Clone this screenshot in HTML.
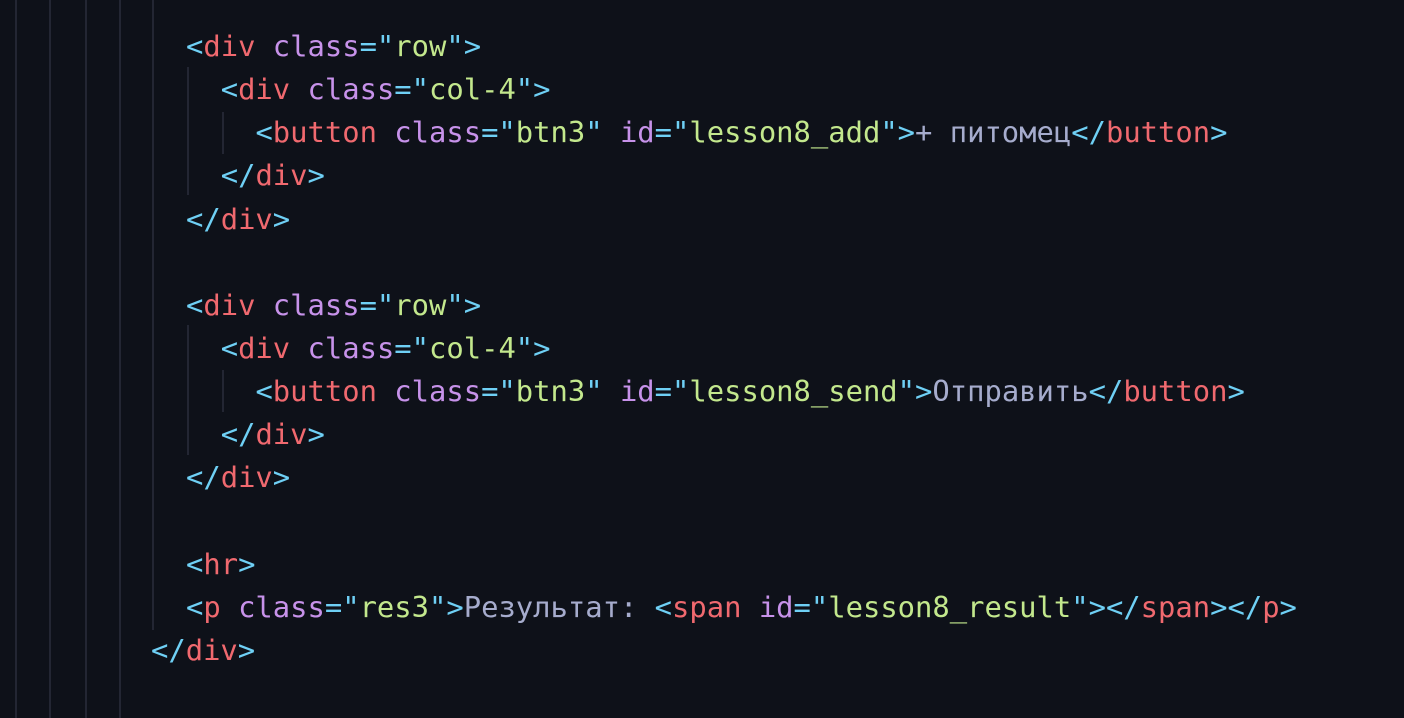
<!DOCTYPE html>
<html><head><meta charset="utf-8"><style>
body{margin:0;width:1404px;height:718px;background:#0e1119;overflow:hidden;position:relative}
.g{position:absolute;width:2px;background:#232633}
.c{position:absolute;left:0;top:25px;font-family:"DejaVu Sans Mono","Liberation Mono",monospace;font-size:28.83px;line-height:43.14px;white-space:pre;color:#a6accd}
.p{color:#6fd0f5}.t{color:#f0696f}.a{color:#c792ea}.s{color:#c3e88d}
</style></head><body>
<div class="g" style="left:15px;top:0;height:718px"></div>
<div class="g" style="left:49px;top:0;height:718px"></div>
<div class="g" style="left:85px;top:0;height:718px"></div>
<div class="g" style="left:119px;top:0;height:718px"></div>
<div class="g" style="left:152px;top:0;height:630px"></div>
<div class="g" style="left:187px;top:67px;height:128px"></div>
<div class="g" style="left:187px;top:325px;height:130px"></div>
<div class="g" style="left:222px;top:112px;height:42px"></div>
<div class="g" style="left:222px;top:370px;height:42px"></div>
<div class="c" style="left:186px"><span class="p">&lt;</span><span class="t">div</span> <span class="a">class</span><span class="p">="</span><span class="s">row</span><span class="p">"&gt;</span>
  <span class="p">&lt;</span><span class="t">div</span> <span class="a">class</span><span class="p">="</span><span class="s">col-4</span><span class="p">"&gt;</span>
    <span class="p">&lt;</span><span class="t">button</span> <span class="a">class</span><span class="p">="</span><span class="s">btn3</span><span class="p">"</span> <span class="a">id</span><span class="p">="</span><span class="s">lesson8_add</span><span class="p">"&gt;</span>+ питомец<span class="p">&lt;/</span><span class="t">button</span><span class="p">&gt;</span>
  <span class="p">&lt;/</span><span class="t">div</span><span class="p">&gt;</span>
<span class="p">&lt;/</span><span class="t">div</span><span class="p">&gt;</span>

<span class="p">&lt;</span><span class="t">div</span> <span class="a">class</span><span class="p">="</span><span class="s">row</span><span class="p">"&gt;</span>
  <span class="p">&lt;</span><span class="t">div</span> <span class="a">class</span><span class="p">="</span><span class="s">col-4</span><span class="p">"&gt;</span>
    <span class="p">&lt;</span><span class="t">button</span> <span class="a">class</span><span class="p">="</span><span class="s">btn3</span><span class="p">"</span> <span class="a">id</span><span class="p">="</span><span class="s">lesson8_send</span><span class="p">"&gt;</span>Отправить<span class="p">&lt;/</span><span class="t">button</span><span class="p">&gt;</span>
  <span class="p">&lt;/</span><span class="t">div</span><span class="p">&gt;</span>
<span class="p">&lt;/</span><span class="t">div</span><span class="p">&gt;</span>

<span class="p">&lt;</span><span class="t">hr</span><span class="p">&gt;</span>
<span class="p">&lt;</span><span class="t">p</span> <span class="a">class</span><span class="p">="</span><span class="s">res3</span><span class="p">"&gt;</span>Результат: <span class="p">&lt;</span><span class="t">span</span> <span class="a">id</span><span class="p">="</span><span class="s">lesson8_result</span><span class="p">"&gt;&lt;/</span><span class="t">span</span><span class="p">&gt;&lt;/</span><span class="t">p</span><span class="p">&gt;</span></div>
<div class="c" style="left:151px;top:629px"><span class="p">&lt;/</span><span class="t">div</span><span class="p">&gt;</span></div>
</body></html>
